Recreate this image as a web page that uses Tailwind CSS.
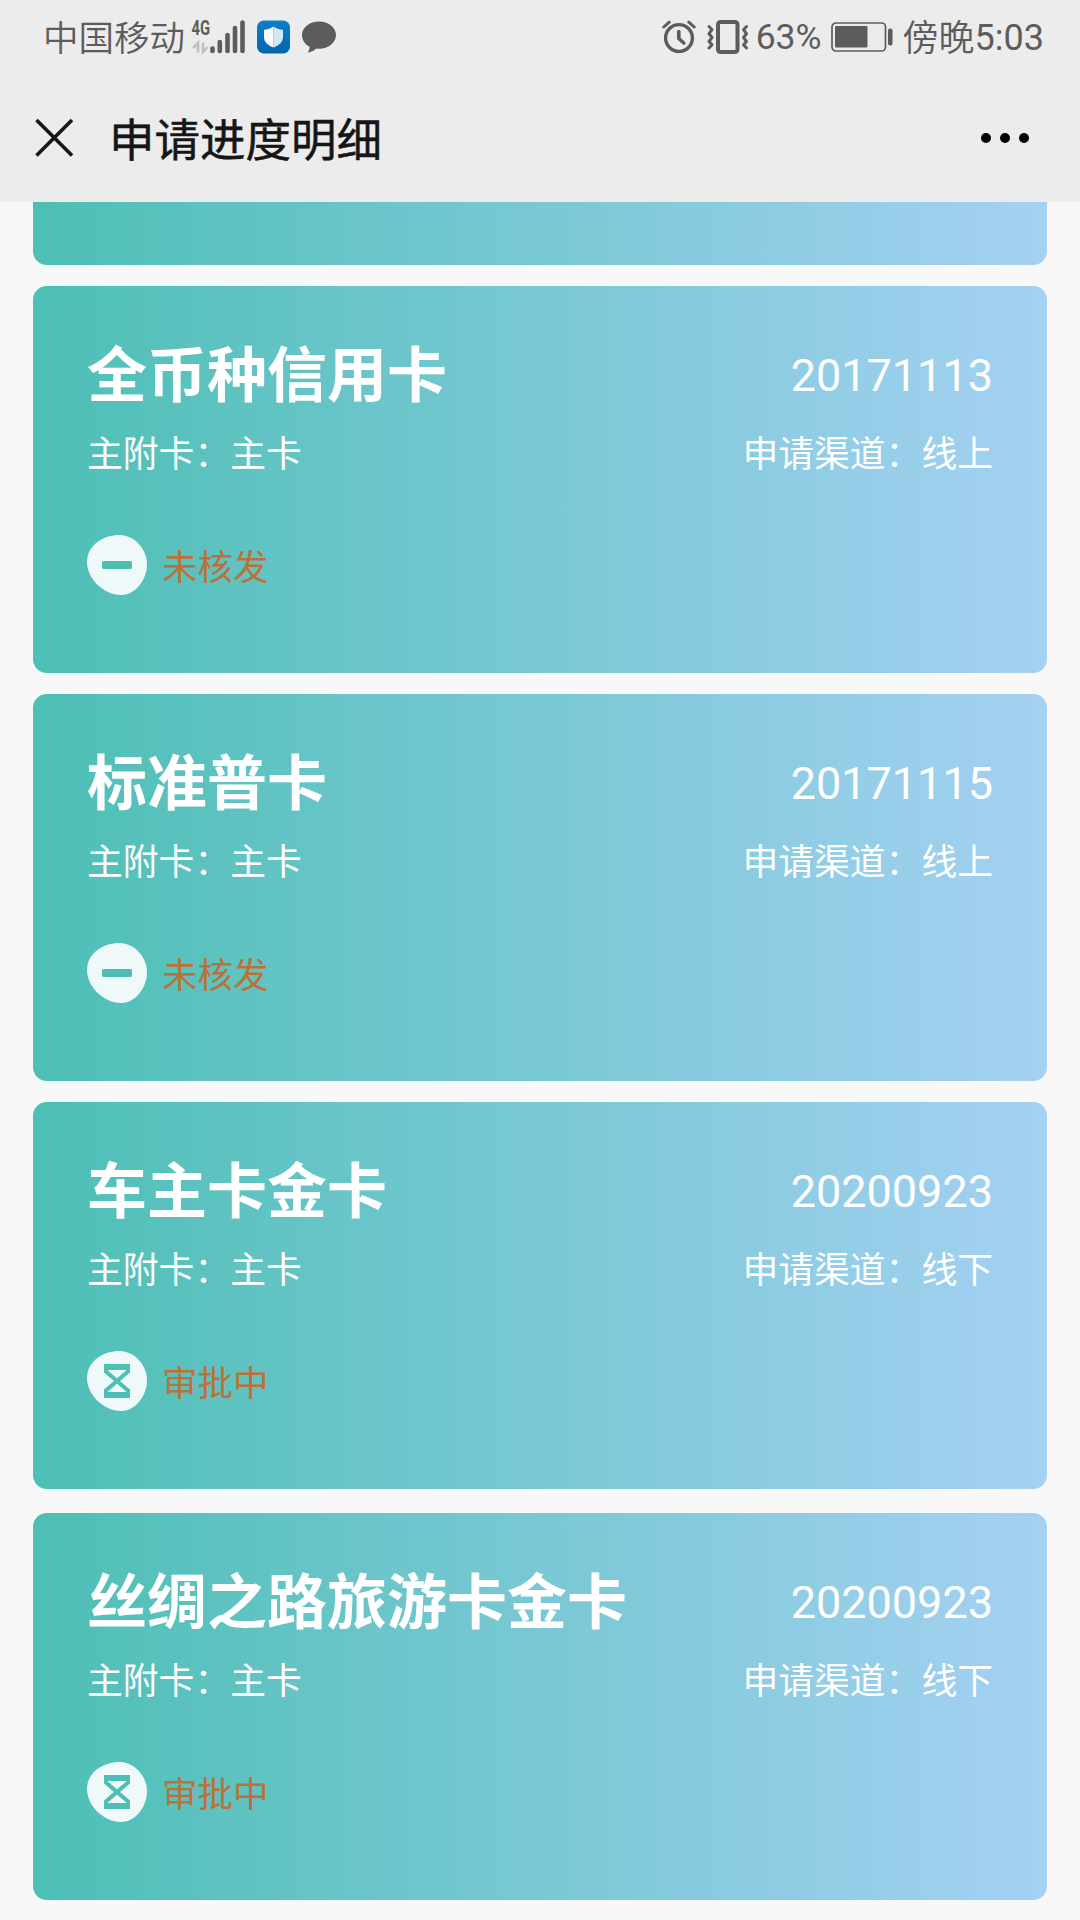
<!DOCTYPE html>
<html lang="zh-CN">
<head>
    <meta charset="UTF-8">
    <meta name="viewport" content="width=device-width, initial-scale=1.0">
    <title>申请进度明细</title>
    <script src="https://cdn.jsdelivr.net/npm/@tailwindcss/browser@4"></script>
</head>
<body class="bg-[#f8f8f8] h-[1920px] overflow-hidden flex flex-col font-[Roboto,'Noto_Sans_CJK_SC',sans-serif]">
    <!-- 顶部 -->
    <header class="h-[202px] shrink-0 bg-[#ececec]">
        <!-- 状态栏 -->
        <div class="h-[74px] flex items-center justify-between pl-[43px] pr-[36px] text-[36px] leading-none text-[#5c5c5c]">
            <div class="flex items-center">
                <span class="pt-[5px] text-[35.5px] font-[350]">中国移动</span>
                <!-- 信号 -->
                <svg class="ml-[5px] w-[56px] h-[44px]" viewBox="190 14 56 44">
                    <text x="191.5" y="33.500" font-family="Roboto" font-size="19.500" font-weight="700" fill="#5c5c5c" textLength="18.500" lengthAdjust="spacingAndGlyphs">4G</text>
                    <path d="M198 51.500V42l-5 5M203 41.500V51l4.500-5" fill="none" stroke="#c0c0c0" stroke-width="2.600"/>
                    <path d="M212.500 47.500v2.500M219.800 41v9M227.500 34v16M235 27v23M242.500 21.500v28.500" stroke="#5c5c5c" stroke-width="4.600" stroke-linecap="round"/>
                </svg>
                <!-- 安全盾牌 -->
                <svg class="ml-[11px] w-[33px] h-[34px]" viewBox="0 0 33 34">
                    <defs>
                        <linearGradient id="shieldBg" x1="0" y1="0" x2="0" y2="1">
                            <stop offset="0" stop-color="#0a7fcb"/>
                            <stop offset="1" stop-color="#0464ae"/>
                        </linearGradient>
                    </defs>
                    <rect y="0.500" width="33" height="33" rx="7" fill="url(#shieldBg)"/>
                    <path d="M16.500 6.500C13 8.800 10 9.600 7 9.800v7.200c0 5 4 8.500 9.500 10.500z" fill="#fff"/>
                    <path d="M16.500 6.500c3.500 2.300 6.500 3.100 9.500 3.300v7.200c0 5-4 8.500-9.500 10.500z" fill="#d3e8f5"/>
                </svg>
                <!-- 消息 -->
                <svg class="ml-[12px] w-[34px] h-[34px]" viewBox="0 0 34 34">
                    <path d="M17 1.500c9.400 0 17 6 17 13.500s-7.600 13.800-17 13.800c-1 0-1.900 0-2.800-.2C12 30.500 9 32.300 5.500 32.800c1.500-1.800 2.200-3.800 2-6C3 24.400 0 20 0 15 0 7.500 7.600 1.500 17 1.500z" fill="#5c5c5c"/>
                </svg>
            </div>
            <div class="flex items-center">
                <!-- 闹钟 -->
                <svg class="w-[34px] h-[34px]" viewBox="0 0 34 34" fill="none" stroke="#5c5c5c" stroke-width="3.400" stroke-linecap="round" stroke-linejoin="round">
                    <circle cx="17" cy="18" r="13.400"/>
                    <path d="M16.800 11.500v7l5 4.500" stroke-width="3.600"/>
                    <path d="M1.800 7l5.400-4.800M26.800 2.200L32.200 7" stroke-width="3"/>
                </svg>
                <!-- 震动 -->
                <svg class="ml-[10px] w-[44px] h-[34px]" viewBox="0 0 44 34" fill="none" stroke="#5c5c5c" stroke-width="3" stroke-linejoin="round" stroke-linecap="round">
                    <rect x="12" y="2" width="19.500" height="30" rx="2.500" stroke-width="4"/>
                    <path d="M3 6.500l3 3.200-3 4 3 3.800-3 4 3 3.200-3 3.300M40.500 6.500l-3 3.200 3 4-3 3.800 3 4-3 3.200 3 3.300"/>
                </svg>
                <span class="ml-[6px] pt-[2px] text-[35.5px]">63%</span>
                <!-- 电池 -->
                <svg class="ml-[9px] w-[62px] h-[30px]" viewBox="0 0 62 30">
                    <rect x="1" y="1" width="53.500" height="28" rx="4" fill="none" stroke="#5c5c5c" stroke-width="1.700"/>
                    <rect x="4" y="4" width="32.500" height="21.500" rx="1" fill="#5c5c5c"/>
                    <rect x="57" y="6.500" width="4.500" height="17" rx="2" fill="#5c5c5c"/>
                </svg>
                <span class="ml-[10px] pt-[4px] font-[350]">傍晚</span>
                <span class="pt-[2px]">5:03</span>
            </div>
        </div>
        <!-- 标题栏 -->
        <div class="h-[128px] flex items-center pl-[34px] pr-[50px] text-[#161616]">
            <svg class="w-[40px] h-[40px]" viewBox="0 0 40 40" stroke="#161616" stroke-width="3.600" fill="none">
                <path d="M2.500 2L38 37.500M38 2L2.500 37.500"/>
            </svg>
            <h1 class="ml-[35px] pt-[8px] text-[45.500px] leading-none font-normal [-webkit-text-stroke:0.5px_#161616]">申请进度明细</h1>
            <svg class="ml-auto w-[50px] h-[12px]" viewBox="0 0 50 12">
                <circle cx="6" cy="6" r="5"/>
                <circle cx="25" cy="6" r="5"/>
                <circle cx="44" cy="6" r="5"/>
            </svg>
        </div>
    </header>

    <!-- 申请列表 -->
    <main class="flex flex-col px-[33px] text-white">
        <section class="h-[63px] mb-[21px] rounded-b-[14px] bg-[linear-gradient(90deg,#4dbfb5,#a5d1f3)]"></section>

        <section class="h-[387px] mb-[21px] px-[54px] pt-[61px] rounded-[14px] bg-[linear-gradient(90deg,#4dbfb5,#a5d1f3)]">
            <div class="flex items-start justify-between h-[60px]">
                <h2 class="text-[60px] leading-none font-bold">全币种信用卡</h2>
                <span class="pt-[6px] text-[45px] leading-none">20171113</span>
            </div>
            <div class="flex justify-between mt-[30px] text-[35.8px] leading-[36px]">
                <span>主附卡：主卡</span>
                <span>申请渠道：线上</span>
            </div>
            <div class="flex items-center mt-[62px] text-[35.5px] leading-[36px] text-[#bd7138]">
                <svg class="w-[60px] h-[60px]" viewBox="0 0 60 60">
                    <path d="M33 0C47 0 60 14 60 29S49 60 34 60C17 60 0 44 0 27 0 10 16 0 33 0z" fill="#eff9f9"/>
                    <rect x="15" y="26" width="30" height="8" rx="1.500" fill="#4dbfb5"/>
                </svg>
                <span class="ml-[15px] pt-[5px]">未核发</span>
            </div>
        </section>

        <section class="h-[387px] mb-[21px] px-[54px] pt-[61px] rounded-[14px] bg-[linear-gradient(90deg,#4dbfb5,#a5d1f3)]">
            <div class="flex items-start justify-between h-[60px]">
                <h2 class="text-[60px] leading-none font-bold">标准普卡</h2>
                <span class="pt-[6px] text-[45px] leading-none">20171115</span>
            </div>
            <div class="flex justify-between mt-[30px] text-[35.8px] leading-[36px]">
                <span>主附卡：主卡</span>
                <span>申请渠道：线上</span>
            </div>
            <div class="flex items-center mt-[62px] text-[35.5px] leading-[36px] text-[#bd7138]">
                <svg class="w-[60px] h-[60px]" viewBox="0 0 60 60">
                    <path d="M33 0C47 0 60 14 60 29S49 60 34 60C17 60 0 44 0 27 0 10 16 0 33 0z" fill="#eff9f9"/>
                    <rect x="15" y="26" width="30" height="8" rx="1.500" fill="#4dbfb5"/>
                </svg>
                <span class="ml-[15px] pt-[5px]">未核发</span>
            </div>
        </section>

        <section class="h-[387px] mb-[24px] px-[54px] pt-[61px] rounded-[14px] bg-[linear-gradient(90deg,#4dbfb5,#a5d1f3)]">
            <div class="flex items-start justify-between h-[60px]">
                <h2 class="text-[60px] leading-none font-bold">车主卡金卡</h2>
                <span class="pt-[6px] text-[45px] leading-none">20200923</span>
            </div>
            <div class="flex justify-between mt-[30px] text-[35.8px] leading-[36px]">
                <span>主附卡：主卡</span>
                <span>申请渠道：线下</span>
            </div>
            <div class="flex items-center mt-[62px] text-[35.5px] leading-[36px] text-[#bd7138]">
                <svg class="w-[60px] h-[60px]" viewBox="0 0 60 60">
                    <path d="M33 0C47 0 60 14 60 29S49 60 34 60C17 60 0 44 0 27 0 10 16 0 33 0z" fill="#eff9f9"/>
                    <path d="M19 16v4.500L30 30 19 39.500V44h22v-4.500L30 30l11-9.500V16z" fill="none" stroke="#4dbfb5" stroke-width="4"/>
                    <path d="M17 16h26M17 44h26" stroke="#4dbfb5" stroke-width="6"/>
                </svg>
                <span class="ml-[15px] pt-[5px]">审批中</span>
            </div>
        </section>

        <section class="h-[387px] px-[54px] pt-[61px] rounded-[14px] bg-[linear-gradient(90deg,#4dbfb5,#a5d1f3)]">
            <div class="flex items-start justify-between h-[60px]">
                <h2 class="text-[60px] leading-none font-bold">丝绸之路旅游卡金卡</h2>
                <span class="pt-[6px] text-[45px] leading-none">20200923</span>
            </div>
            <div class="flex justify-between mt-[30px] text-[35.8px] leading-[36px]">
                <span>主附卡：主卡</span>
                <span>申请渠道：线下</span>
            </div>
            <div class="flex items-center mt-[62px] text-[35.5px] leading-[36px] text-[#bd7138]">
                <svg class="w-[60px] h-[60px]" viewBox="0 0 60 60">
                    <path d="M33 0C47 0 60 14 60 29S49 60 34 60C17 60 0 44 0 27 0 10 16 0 33 0z" fill="#eff9f9"/>
                    <path d="M19 16v4.500L30 30 19 39.500V44h22v-4.500L30 30l11-9.500V16z" fill="none" stroke="#4dbfb5" stroke-width="4"/>
                    <path d="M17 16h26M17 44h26" stroke="#4dbfb5" stroke-width="6"/>
                </svg>
                <span class="ml-[15px] pt-[5px]">审批中</span>
            </div>
        </section>
    </main>
</body>
</html>
